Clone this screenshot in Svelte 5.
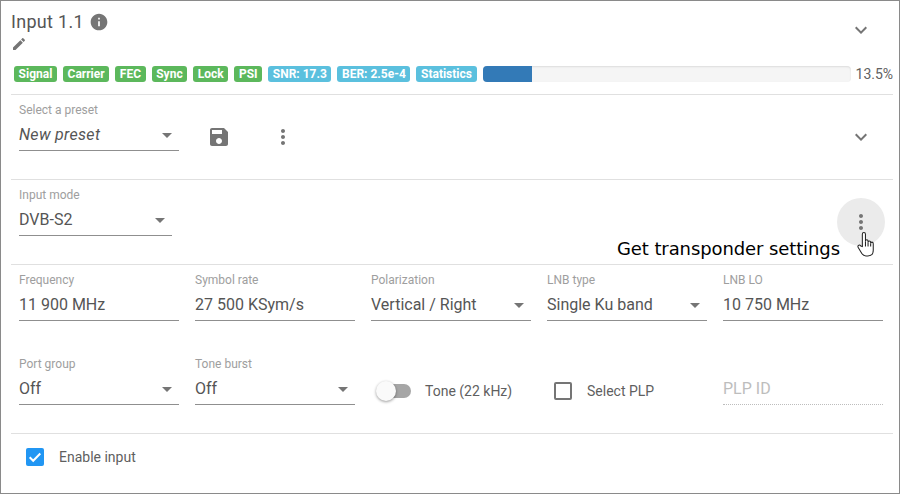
<script>
  const badges = [
    { text: 'Signal', kind: 'ok' },
    { text: 'Carrier', kind: 'ok' },
    { text: 'FEC', kind: 'ok' },
    { text: 'Sync', kind: 'ok' },
    { text: 'Lock', kind: 'ok' },
    { text: 'PSI', kind: 'ok' },
    { text: 'SNR: 17.3', kind: 'info' },
    { text: 'BER: 2.5e-4', kind: 'info' },
    { text: 'Statistics', kind: 'info' }
  ];

  const tuning = [
    { label: 'Frequency', value: '11 900 MHz' },
    { label: 'Symbol rate', value: '27 500 KSym/s' },
    { label: 'Polarization', value: 'Vertical / Right', select: true },
    { label: 'LNB type', value: 'Single Ku band', select: true },
    { label: 'LNB LO', value: '10 750 MHz' }
  ];
</script>

{#snippet field(label, value, select, italic)}
  <div class="field">
    <div class="field-label">{label}</div>
    <div class="field-value" class:italic>
      <span>{value}</span>
      {#if select}<i class="arrow"></i>{/if}
    </div>
  </div>
{/snippet}

{#snippet chevron()}
  <svg class="chevron" width="24" height="24" viewBox="0 0 24 24"><path d="M7.41 8.59 12 13.17l4.59-4.58L18 10l-6 6-6-6z" /></svg>
{/snippet}

{#snippet dots()}
  <svg width="24" height="24" viewBox="0 0 24 24"><path d="M12 8c1.1 0 2-.9 2-2s-.9-2-2-2-2 .9-2 2 .9 2 2 2zm0 2c-1.100 0-2 .9-2 2s.9 2 2 2 2-.9 2-2-.9-2-2-2zm0 6c-1.100 0-2 .9-2 2s.9 2 2 2 2-.9 2-2-.9-2-2-2z" /></svg>
{/snippet}

<div class="card">
  <header class="head">
    <div class="title-block">
      <div class="title">
        <span>Input 1.1</span>
        <svg width="20" height="20" viewBox="0 0 24 24"><path d="M12 2C6.480 2 2 6.480 2 12s4.480 10 10 10 10-4.480 10-10S17.520 2 12 2zm1 15h-2v-6h2v6zm0-8h-2V7h2v2z" /></svg>
      </div>
      <svg class="pencil" width="16" height="16" viewBox="0 0 24 24"><path d="M3 17.250V21h3.750L17.810 9.940l-3.750-3.750L3 17.250zM20.710 7.040c.39-.39.39-1.020 0-1.410l-2.340-2.340c-.39-.39-1.020-.39-1.410 0l-1.830 1.830 3.750 3.750 1.830-1.830z" /></svg>
    </div>
    <div class="head-toggle">{@render chevron()}</div>
  </header>

  <div class="status">
    {#each badges as badge}
      <span class="badge {badge.kind}">{badge.text}</span>
    {/each}
    <div class="progress"><div class="progress-bar" style="width: 13.5%"></div></div>
    <span class="percent">13.5%</span>
  </div>

  <section class="row preset">
    {@render field('Select a preset', 'New preset', true, true)}
    <svg class="save" width="24" height="24" viewBox="0 0 24 24"><path d="M17 3H5c-1.110 0-2 .9-2 2v14c0 1.100.89 2 2 2h14c1.100 0 2-.9 2-2V7l-4-4zm-5 16c-1.660 0-3-1.340-3-3s1.340-3 3-3 3 1.340 3 3-1.340 3-3 3zm3-10H5V5h10v4z" /></svg>
    <span class="preset-menu">{@render dots()}</span>
    <span class="preset-toggle">{@render chevron()}</span>
  </section>

  <section class="row mode">
    <div class="mode-field">{@render field('Input mode', 'DVB-S2', true)}</div>
    <div class="menu-hover">{@render dots()}</div>
    <div class="tooltip">Get transponder settings</div>
    <svg class="hand" width="21" height="27" viewBox="0 0 20 26">
      <path d="M6 15V3.200C6 2 6.800 1.500 7.500 1.500S9 2 9 3.200V10c0-1 .6-1.500 1.300-1.500S11.500 9 11.500 10v1c0-1 .6-1.400 1.200-1.400s1.300.5 1.300 1.400v1c0-.9.600-1.300 1.200-1.300s1.300.5 1.300 1.500v6.300c0 3-1.700 5.500-5.200 5.500H9.500c-2 0-3-.8-4-2.300L2 15.800c-.6-1-.2-1.800.5-2.100.8-.4 1.500 0 2 .7z" fill="#fff" stroke="#222" stroke-width="1" />
      <path d="M9 10v5M11.500 11v4M14 12v3" stroke="#222" stroke-width="1" fill="none" />
    </svg>
  </section>

  <section class="row tuning">
    <div class="grid">
      {#each tuning as item}
        {@render field(item.label, item.value, item.select)}
      {/each}
    </div>
    <div class="grid lower">
      {@render field('Port group', 'Off', true)}
      {@render field('Tone burst', 'Off', true)}
      <div class="switch-cell">
        <span class="switch"><i class="knob"></i></span>
        <span class="option">Tone (22 kHz)</span>
      </div>
      <div class="check-cell">
        <span class="checkbox"></span>
        <span class="option">Select PLP</span>
      </div>
      <div class="plp">PLP ID</div>
    </div>
  </section>

  <footer class="foot">
    <span class="checkbox checked">
      <svg width="18" height="18" viewBox="0 0 18 18"><path d="M3.700 9.300 7.200 12.800 14.300 5.500" fill="none" stroke="#fff" stroke-width="2" /></svg>
    </span>
    <span class="option">Enable input</span>
  </footer>
</div>

<style>
  :global(body) {
    margin: 0;
    background: #fff;
  }

  .card {
    box-sizing: border-box;
    position: relative;
    width: 900px;
    height: 494px;
    padding: 0 6px 0 10px;
    border: 1px solid #8a8a8a;
    font-family: Roboto, sans-serif;
    color: #555;
    overflow: hidden;
  }

  svg {
    display: block;
    fill: #757575;
  }

  .head {
    display: flex;
    justify-content: space-between;
    height: 65px;
  }

  .title-block {
    padding-top: 10px;
  }

  .title {
    display: flex;
    align-items: center;
    gap: 5px;
    height: 22px;
    font-size: 18px;
    letter-spacing: 0.3px;
    line-height: 22px;
  }

  .pencil {
    margin: 3px 0 0 0;
  }

  .head-toggle {
    margin: 17px 20px 0 0;
  }

  .status {
    display: flex;
    align-items: center;
    height: 16px;
    padding-left: 3px;
    padding-bottom: 12px;
    border-bottom: 1px solid #e0e0e0;
  }

  .badge {
    height: 16px;
    margin-right: 6px;
    padding: 0 4.600px;
    border-radius: 3px;
    color: #fff;
    font-size: 12px;
    font-weight: 700;
    line-height: 16px;
    white-space: nowrap;
  }

  .ok {
    background: #5cb85c;
  }

  .info {
    background: #5bc0de;
  }

  .progress {
    flex: none;
    width: 368px;
    height: 16px;
    border-radius: 4px;
    background: #f5f5f5;
    box-shadow: inset 0 1px 2px rgba(0, 0, 0, 0.1);
    overflow: hidden;
  }

  .progress-bar {
    height: 100%;
    background: #337ab7;
  }

  .percent {
    margin-left: 5px;
    font-size: 14px;
    color: #616161;
  }

  .field {
    width: 160px;
    height: 56px;
  }

  .field-label {
    height: 16px;
    font-size: 12px;
    line-height: 16px;
    color: #9e9e9e;
  }

  .field-value {
    display: flex;
    align-items: center;
    justify-content: space-between;
    box-sizing: border-box;
    height: 33px;
    padding: 0 7px 0 0;
    border-bottom: 1px solid #8f8f8f;
    font-size: 16px;
  }

  .italic {
    font-style: italic;
    letter-spacing: 0.3px;
  }

  .arrow {
    width: 0;
    height: 0;
    margin-top: 2px;
    border-left: 5px solid transparent;
    border-right: 5px solid transparent;
    border-top: 5px solid #757575;
  }

  .row {
    position: relative;
    padding-left: 8px;
    border-bottom: 1px solid #e0e0e0;
  }

  .preset {
    display: flex;
    box-sizing: border-box;
    height: 85px;
    padding-top: 7px;
  }

  .save {
    margin: 23px 0 0 28px;
  }

  .preset-menu {
    margin: 23px 0 0 40px;
  }

  .preset-toggle {
    margin: 23px 0 0 auto;
    padding-right: 20px;
  }

  .mode {
    box-sizing: border-box;
    height: 85px;
    padding-top: 7px;
  }

  .mode-field .field {
    width: 153px;
  }

  .menu-hover {
    position: absolute;
    top: 18px;
    right: 8px;
    display: flex;
    align-items: center;
    justify-content: center;
    width: 48px;
    height: 48px;
    border-radius: 50%;
    background: #ebebeb;
  }

  .tooltip {
    position: absolute;
    top: 59px;
    left: 606px;
    font-family: "DejaVu Sans", sans-serif;
    font-size: 18px;
    letter-spacing: -0.1px;
    line-height: 20px;
    color: #000;
    white-space: nowrap;
  }

  .hand {
    position: absolute;
    top: 51px;
    left: 845px;
  }

  .tuning {
    box-sizing: border-box;
    height: 169px;
    padding-top: 7px;
  }

  .grid {
    display: grid;
    grid-template-columns: repeat(5, 160px);
    column-gap: 16px;
  }

  .lower {
    margin-top: 28px;
  }

  .switch-cell,
  .check-cell {
    display: flex;
    align-items: center;
    box-sizing: border-box;
    height: 56px;
    padding-top: 13px;
  }

  .switch {
    position: relative;
    width: 34px;
    height: 14px;
    margin-left: 6px;
    border-radius: 7px;
    background: #a6a6a6;
  }

  .knob {
    position: absolute;
    top: -3px;
    left: -1px;
    width: 20px;
    height: 20px;
    border-radius: 50%;
    background: #fafafa;
    box-shadow: 0 1px 3px rgba(0, 0, 0, 0.4);
  }

  .switch + .option {
    margin-left: 14px;
  }

  .option {
    font-size: 14px;
    color: #5f5f5f;
  }

  .checkbox {
    display: block;
    box-sizing: border-box;
    flex: none;
    width: 18px;
    height: 18px;
    border: 2px solid #757575;
    border-radius: 2px;
  }

  .check-cell .checkbox {
    margin: 0 15px 0 7px;
  }

  .checked {
    border: 0;
    background: #2196f3;
  }

  .plp {
    box-sizing: border-box;
    height: 33px;
    margin-top: 16px;
    padding-top: 7px;
    border-bottom: 1px dotted #bdbdbd;
    font-size: 16px;
    line-height: 20px;
    color: #bdbdbd;
  }

  .foot {
    display: flex;
    align-items: center;
    gap: 15px;
    height: 46px;
    padding-left: 15px;
  }
</style>
